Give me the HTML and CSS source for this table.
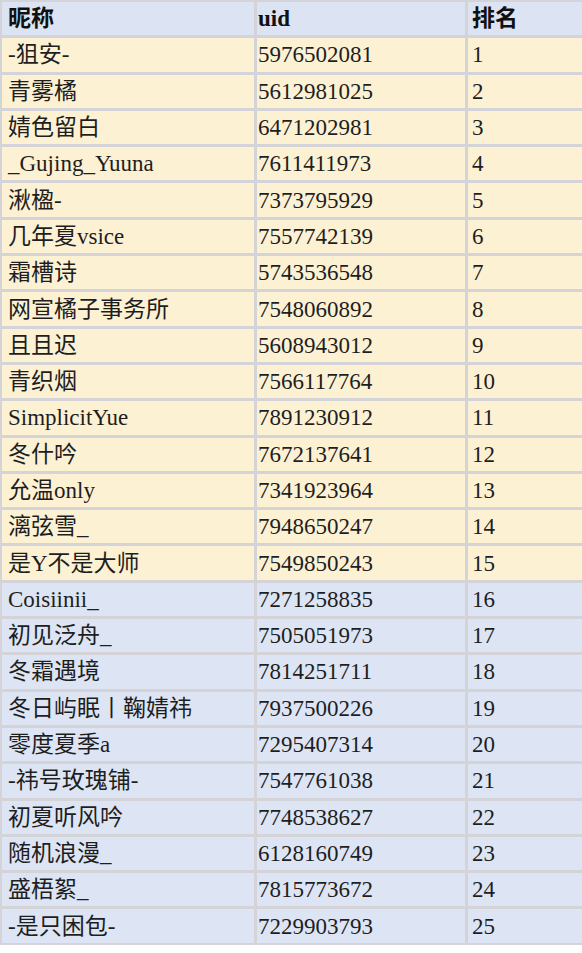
FILE: index.html
```html
<!DOCTYPE html>
<html lang="zh">
<head>
<meta charset="utf-8">
<title>排名</title>
<link rel="stylesheet" href="styles.css">
</head>
<body>
<div class="sheet">
  <div class="row head"><div class="c1">昵称</div><div class="c2">uid</div><div class="c3">排名</div></div>
  <div class="row warm"><div class="c1">-狙安-</div><div class="c2">5976502081</div><div class="c3">1</div></div>
  <div class="row warm"><div class="c1">青雾橘</div><div class="c2">5612981025</div><div class="c3">2</div></div>
  <div class="row warm"><div class="c1">婧色留白</div><div class="c2">6471202981</div><div class="c3">3</div></div>
  <div class="row warm"><div class="c1">_Gujing_Yuuna</div><div class="c2">7611411973</div><div class="c3">4</div></div>
  <div class="row warm"><div class="c1">湫楹-</div><div class="c2">7373795929</div><div class="c3">5</div></div>
  <div class="row warm"><div class="c1">几年夏vsice</div><div class="c2">7557742139</div><div class="c3">6</div></div>
  <div class="row warm"><div class="c1">霜槽诗</div><div class="c2">5743536548</div><div class="c3">7</div></div>
  <div class="row warm"><div class="c1">网宣橘子事务所</div><div class="c2">7548060892</div><div class="c3">8</div></div>
  <div class="row warm"><div class="c1">且且迟</div><div class="c2">5608943012</div><div class="c3">9</div></div>
  <div class="row warm"><div class="c1">青织烟</div><div class="c2">7566117764</div><div class="c3">10</div></div>
  <div class="row warm"><div class="c1">SimplicitYue</div><div class="c2">7891230912</div><div class="c3">11</div></div>
  <div class="row warm"><div class="c1">冬什吟</div><div class="c2">7672137641</div><div class="c3">12</div></div>
  <div class="row warm"><div class="c1">允温only</div><div class="c2">7341923964</div><div class="c3">13</div></div>
  <div class="row warm"><div class="c1">漓弦雪_</div><div class="c2">7948650247</div><div class="c3">14</div></div>
  <div class="row warm"><div class="c1">是Y不是大师</div><div class="c2">7549850243</div><div class="c3">15</div></div>
  <div class="row cool"><div class="c1">Coisiinii_</div><div class="c2">7271258835</div><div class="c3">16</div></div>
  <div class="row cool"><div class="c1">初见泛舟_</div><div class="c2">7505051973</div><div class="c3">17</div></div>
  <div class="row cool"><div class="c1">冬霜遇境</div><div class="c2">7814251711</div><div class="c3">18</div></div>
  <div class="row cool"><div class="c1">冬日屿眠丨鞠婧祎</div><div class="c2">7937500226</div><div class="c3">19</div></div>
  <div class="row cool"><div class="c1">零度夏季a</div><div class="c2">7295407314</div><div class="c3">20</div></div>
  <div class="row cool"><div class="c1">-祎号玫瑰铺-</div><div class="c2">7547761038</div><div class="c3">21</div></div>
  <div class="row cool"><div class="c1">初夏听风吟</div><div class="c2">7748538627</div><div class="c3">22</div></div>
  <div class="row cool"><div class="c1">随机浪漫_</div><div class="c2">6128160749</div><div class="c3">23</div></div>
  <div class="row cool"><div class="c1">盛梧絮_</div><div class="c2">7815773672</div><div class="c3">24</div></div>
  <div class="row cool"><div class="c1">-是只困包-</div><div class="c2">7229903793</div><div class="c3">25</div></div>
</div>
</body>
</html>
```
FILE: styles.css
```css
html, body {
  margin: 0;
  padding: 0;
  background: #ffffff;
}
body {
  width: 582px;
  overflow: hidden;
}
.sheet {
  display: flex;
  flex-direction: column;
  gap: 3px;
  background: #d3d3d8;
  padding: 2px 0 2px 2px;
  width: 580px;
  font-family: "Liberation Serif", "Noto Sans CJK SC", serif;
  font-size: 23px;
  color: #1e1e1e;
}
.row {
  display: grid;
  grid-template-columns: 252px 208px 1fr;
  column-gap: 3px;
  height: 33.3px;
}
.row > div {
  display: flex;
  align-items: center;
  white-space: nowrap;
  line-height: 1;
}
.c1 { padding-left: 6px; }
.c2 { padding-left: 1px; }
.c3 { padding-left: 4px; }
.head > div { background: #dce4f4; font-weight: bold; color: #111; }
.warm > div { background: #fdf1d4; }
.cool > div { background: #dde5f4; }
```
